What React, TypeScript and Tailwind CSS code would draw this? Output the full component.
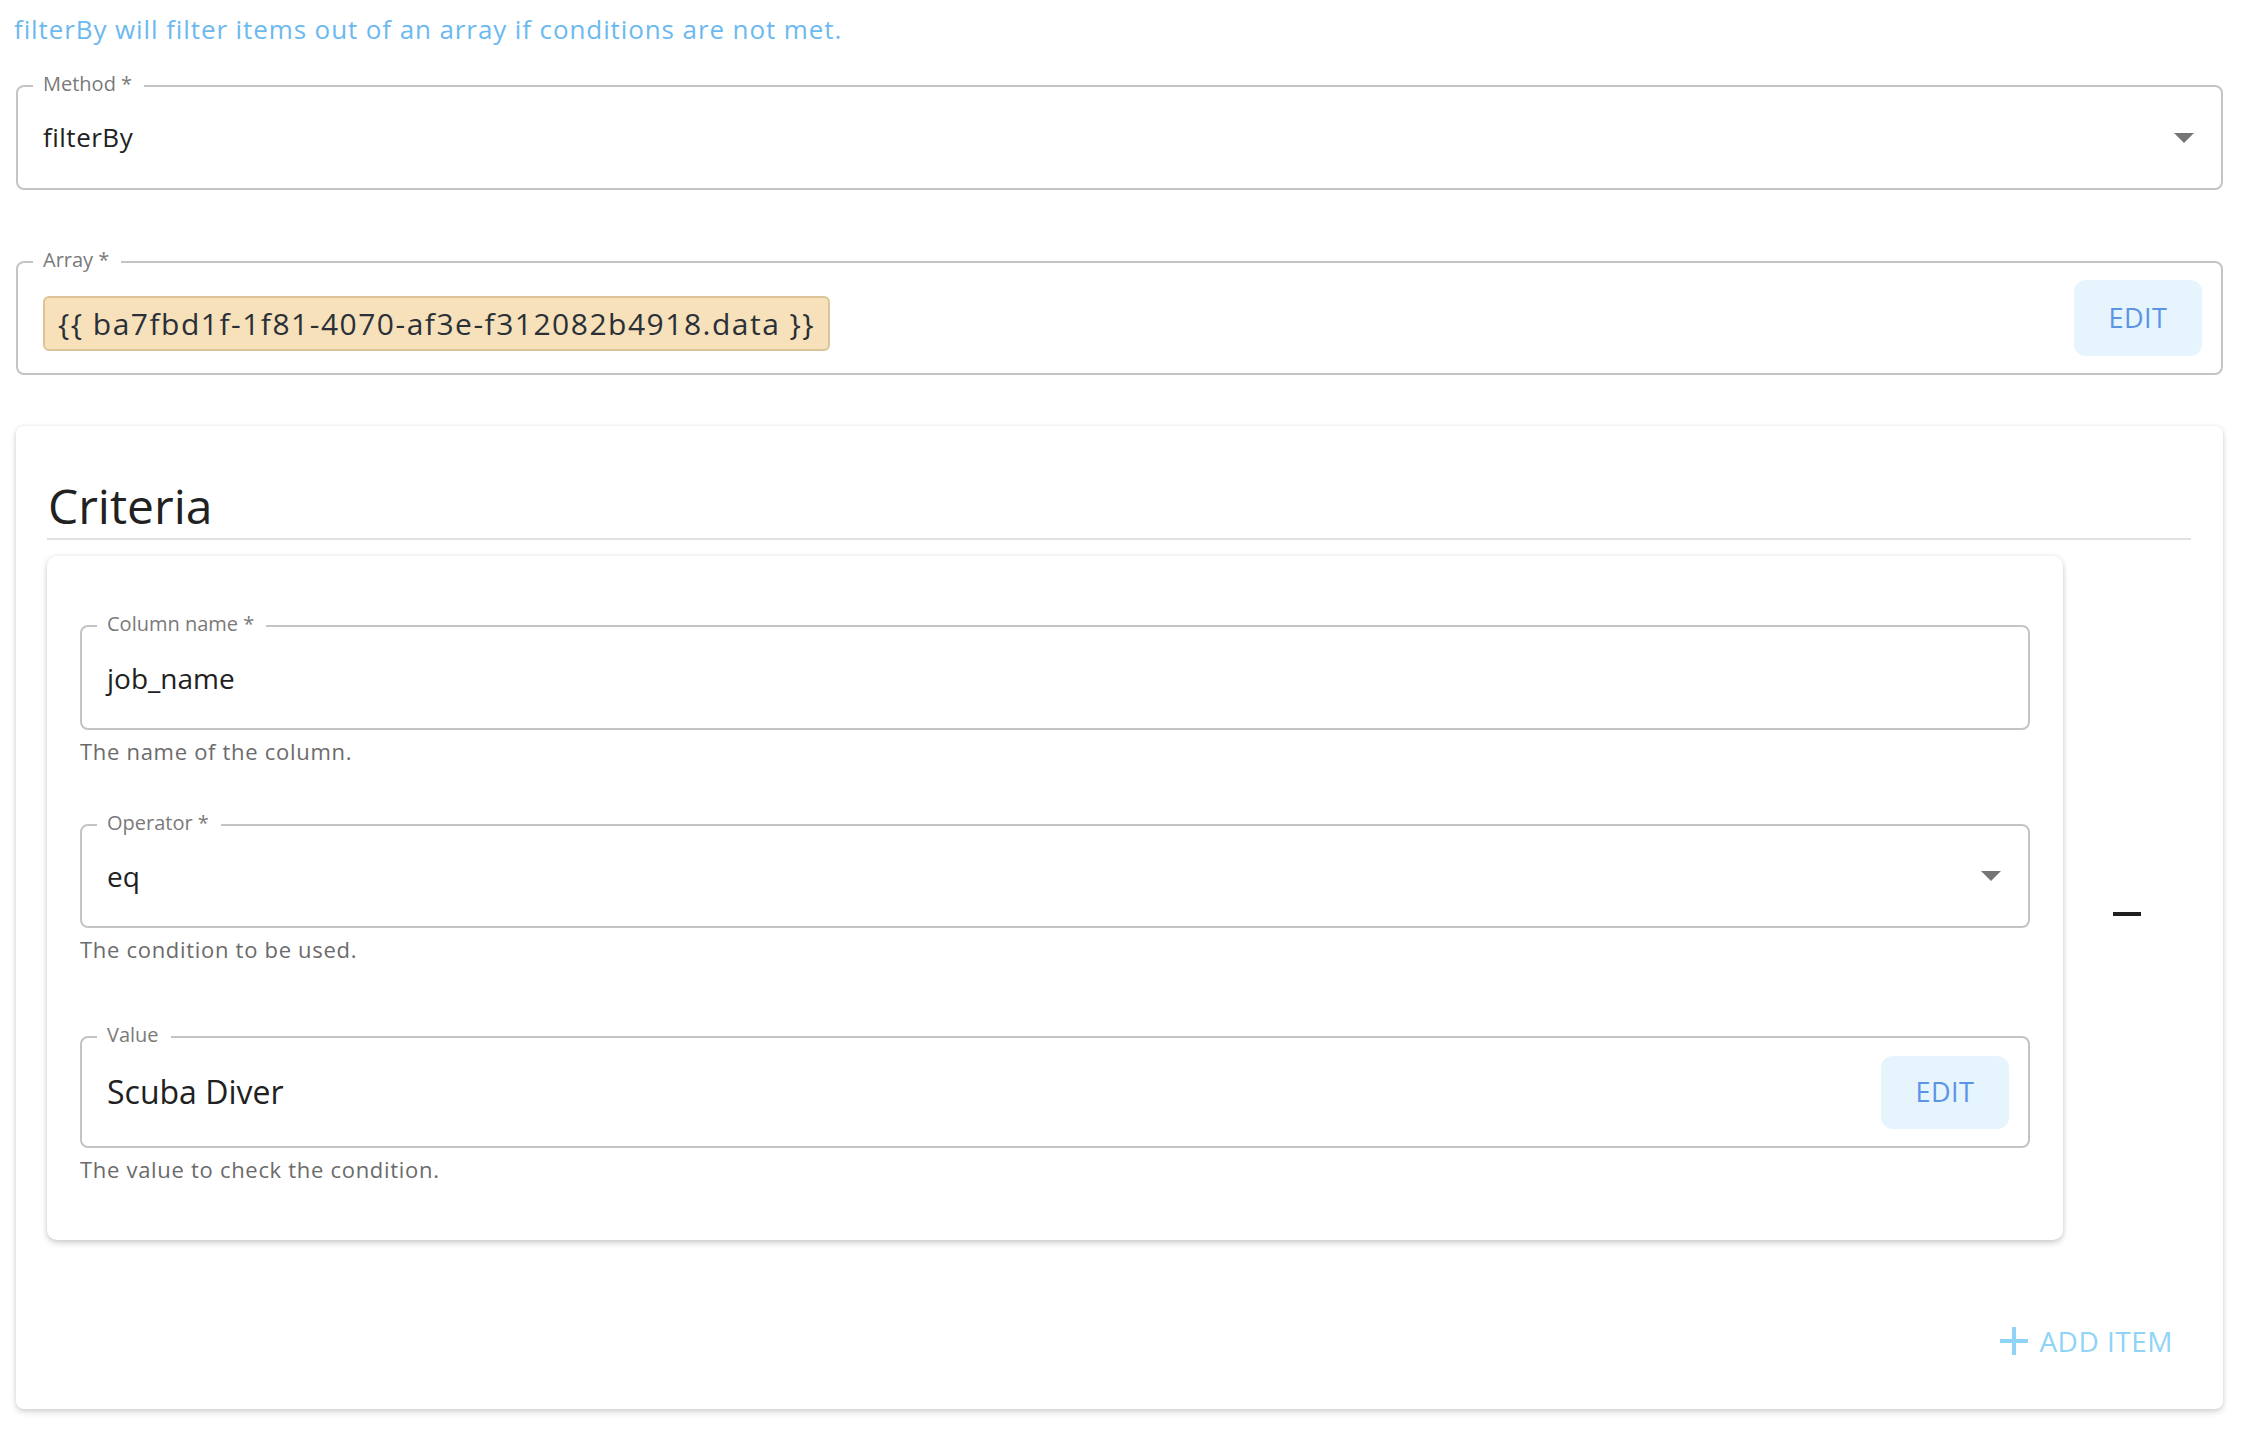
import React from 'react';

type FieldProps = {
  label: string;
  className?: string;
  children: React.ReactNode;
};

// outlined text field with the label sitting in the border notch
function OutlinedField({ label, className = '', children }: FieldProps) {
  return (
    <div className={`relative flex items-center rounded-[8px] border-2 border-[#c4c4c4] pl-[25px] pr-[19px] ${className}`}>
      <span className="absolute left-[15px] top-[-16px] bg-white pl-[10px] pr-[12px] text-[20px] leading-[26px] text-[#7a7a7a]">
        {label}
      </span>
      {children}
    </div>
  );
}

function DropArrow() {
  return (
    <svg width="20" height="10" viewBox="0 0 20 10" className="ml-auto mr-[8px] shrink-0">
      <polygon points="0,0 20,0 10,10" fill="#757575" />
    </svg>
  );
}

function EditButton({ className = '' }: { className?: string }) {
  return (
    <button className={`ml-auto flex w-[128px] shrink-0 items-center justify-center rounded-[12px] bg-[#e6f4fd] text-[27px] tracking-[0.5px] text-[#5b93e6] ${className}`}>
      EDIT
    </button>
  );
}

function Helper({ children, className = '' }: { children: React.ReactNode; className?: string }) {
  return <p className={`text-[22px] leading-[28px] tracking-[0.7px] text-[#6b6b6b] ${className}`}>{children}</p>;
}

export default function App() {
  return (
    <div className="min-h-screen w-full bg-white pl-[16px] pr-[31px] pt-[11px] pb-[20px] [font-family:'Open_Sans',sans-serif]">
      <p className="-ml-[2px] text-[26px] leading-[36px] tracking-[0.9px] text-[#6cb9ef]">
        filterBy will filter items out of an array if conditions are not met.
      </p>

      <OutlinedField label="Method *" className="mt-[38px] h-[105px]">
        <span className="text-[26px] tracking-[0.5px] text-[#212121]">filterBy</span>
        <DropArrow />
      </OutlinedField>

      <OutlinedField label="Array *" className="mt-[71px] h-[114px]">
        <span className="mt-[10px] inline-flex h-[55px] items-center rounded-[6px] border-2 border-[#dcc398] bg-[#f6e1ba] pl-[13px] pr-[13px] text-[30px] tracking-[1.5px] text-[#2b3038]">
          {'{{ ba7fbd1f-1f81-4070-af3e-f312082b4918.data }}'}
        </span>
        <EditButton className="h-[76px]" />
      </OutlinedField>

      <section className="mt-[51px] rounded-[8px] bg-white pl-[31px] pr-[32px] pt-[52px] pb-[40px] shadow-[0_3px_6px_rgba(0,0,0,0.16),0_0_4px_rgba(0,0,0,0.07)]">
        <h2 className="pl-[1px] text-[48px] leading-[56px] text-[#212121]">Criteria</h2>
        <div className="mt-[4px] h-[2px] bg-[#e2e2e2]" />

        <div className="mt-[16px] flex">
          <div className="w-[2016px] rounded-[10px] bg-white px-[33px] pt-[69px] pb-[57px] shadow-[0_3px_6px_rgba(0,0,0,0.18),0_0_4px_rgba(0,0,0,0.07)]">
            <OutlinedField label="Column name *" className="h-[105px]">
              <span className="text-[28px] text-[#212121]">job_name</span>
            </OutlinedField>
            <Helper className="mt-[7px]">The name of the column.</Helper>

            <OutlinedField label="Operator *" className="mt-[59px] h-[104px]">
              <span className="text-[28px] text-[#212121]">eq</span>
              <DropArrow />
            </OutlinedField>
            <Helper className="mt-[7px]">The condition to be used.</Helper>

            <OutlinedField label="Value" className="mt-[73px] h-[112px]">
              <span className="text-[32px] text-[#212121]">Scuba Diver</span>
              <EditButton className="h-[73px]" />
            </OutlinedField>
            <Helper className="mt-[7px]">The value to check the condition.</Helper>
          </div>

          <div className="flex flex-1 items-center justify-center pt-[32px]">
            <svg width="28" height="4" viewBox="0 0 28 4">
              <rect width="28" height="4" fill="#1f1f1f" />
            </svg>
          </div>
        </div>

        <div className="mt-[73px] flex justify-end">
          <button className="flex h-[56px] items-center gap-[11px] px-[18px] text-[28px] tracking-[0.5px] text-[#8fd4f7]">
            <svg width="28" height="28" viewBox="0 0 28 28">
              <rect x="12" y="0" width="4" height="28" fill="#8fd4f7" />
              <rect x="0" y="12" width="28" height="4" fill="#8fd4f7" />
            </svg>
            ADD ITEM
          </button>
        </div>
      </section>
    </div>
  );
}
